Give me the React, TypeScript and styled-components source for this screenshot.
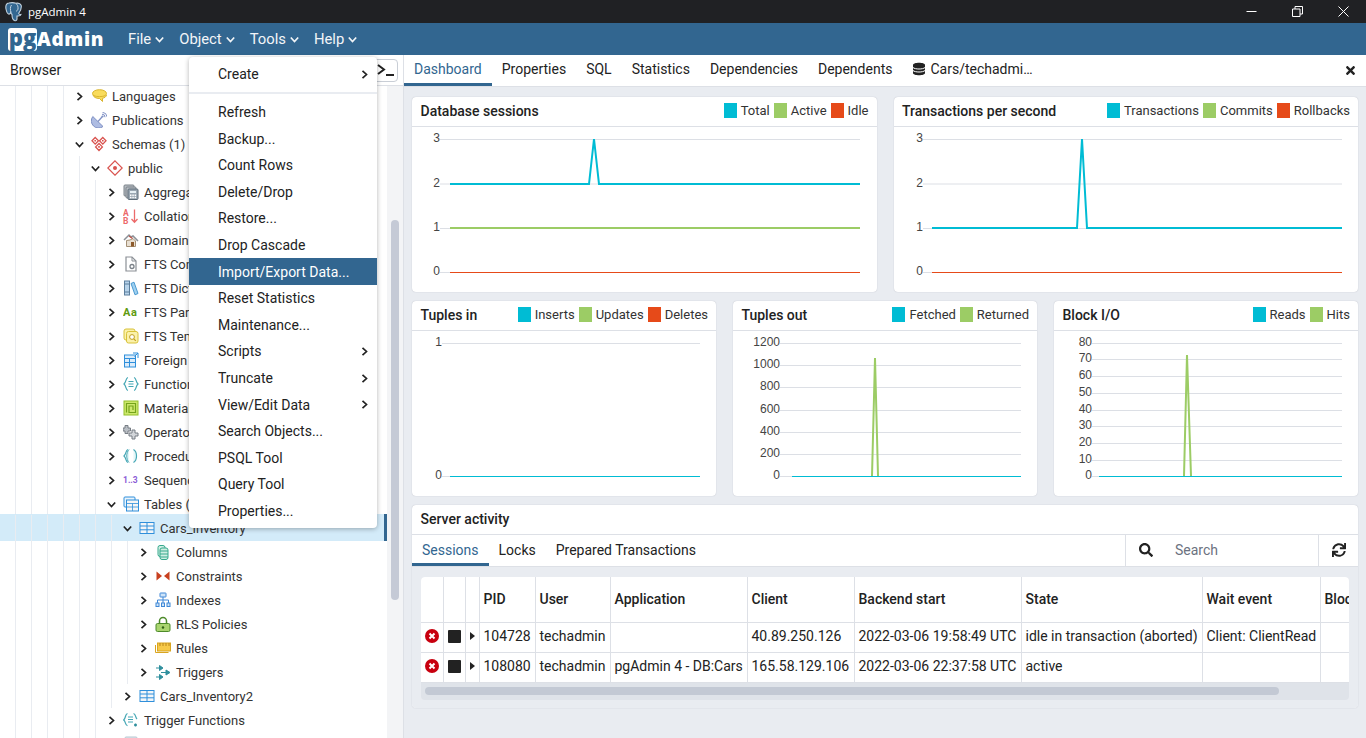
import React from "react";
import styled, { createGlobalStyle } from "styled-components";
import { FaSearch, FaSync, FaTimes } from "react-icons/fa";

const BLUE = "#326690";
const LINE = "#dde0e6";
const PAGE = "#e9ecf1";
const TEXT = "#222222";
const TEAL = "#00bcd4";
const GREEN = "#9ccc65";
const ORANGE = "#e64a19";

const GlobalStyle = createGlobalStyle`
  html, body {
    margin: 0;
    height: 100%;
    overflow: hidden;
  }
  body {
    font-family: Roboto, "Liberation Sans", sans-serif;
    font-size: 14px;
    color: ${TEXT};
  }
  * {
    box-sizing: border-box;
  }
`;

/* ---------- icons ---------- */

const icons: Record<string, React.ReactNode> = {
  languages: (
    <>
      <ellipse cx="8.500" cy="5.500" rx="7" ry="3.800" fill="#f9dc5c" stroke="#d9b530" />
      <path d="M2 7c.5 2 3 3.500 6.500 3.500l3 3v-3.200c2-.4 3.700-1.500 4-3.300" fill="#f9dc5c" stroke="#d9b530" />
      <path d="M2.500 7.500c3 1.500 9 1.500 12 0" fill="none" stroke="#d9b530" />
    </>
  ),
  publications: (
    <>
      <path d="M1.800 4.500L12 14.500A7.200 7.200 0 0 1 1.800 4.500z" fill="#aebce2" stroke="#7f90c4" />
      <path d="M7 9.500l4-4.500" stroke="#7f90c4" strokeWidth="1.200" />
      <circle cx="11.500" cy="4.500" r="1.100" fill="#7f90c4" />
      <path d="M11 2.200a3 3 0 0 1 3 3M11.500 .3a5 5 0 0 1 4.500 4.500" fill="none" stroke="#7f90c4" />
    </>
  ),
  schemas: (
    <>
      <path d="M4.200 1.500l3.300 3.300-3.300 3.300L1 4.800zM11.800 1.500L15 4.800l-3.200 3.300-3.300-3.300zM8 7.500l3.400 3.400L8 14.500l-3.400-3.600z" fill="#fff" stroke="#d9534f" strokeWidth="1.300" />
      <path d="M3.400 4h1.600v1.600H3.400zM11 4h1.600v1.600H11zM7.200 10.100h1.600v1.600H7.200z" fill="#d9534f" />
    </>
  ),
  schema: (
    <>
      <path d="M8 .8L15.200 8 8 15.200.8 8z" fill="#fff" stroke="#d9534f" strokeWidth="1.200" />
      <circle cx="8" cy="8" r="2" fill="#d9534f" />
    </>
  ),
  aggregates: (
    <>
      <rect x="1" y="1" width="10" height="11" rx="1" fill="#b9bec4" stroke="#7b8289" />
      <rect x="3" y="3" width="10" height="11" rx="1" fill="#b9bec4" stroke="#7b8289" />
      <rect x="5" y="5" width="10" height="10.500" rx="1" fill="#9aa7b2" stroke="#5f6d78" />
      <path d="M7 7h6v2H7z" fill="#e7f0f4" />
      <path d="M7 10.500h1.500V12H7zM9.300 10.500h1.500V12H9.300zM11.600 10.500h1.500V12h-1.500zM7 12.800h1.500v1.500H7zM9.300 12.800h1.500v1.500H9.300zM11.600 12.800h1.500v1.500h-1.500z" fill="#fff" />
    </>
  ),
  collations: (
    <>
      <text x="0" y="7.500" fontFamily="Roboto" fontWeight="700" fontSize="8.500" fill="#ec6a6a">A</text>
      <text x="0" y="15.500" fontFamily="Roboto" fontWeight="700" fontSize="8.500" fill="#ec6a6a">B</text>
      <path d="M11.500 1.500v12.500M8.500 11l3 3.200 3-3.200" fill="none" stroke="#ec6a6a" strokeWidth="1.300" />
    </>
  ),
  domains: (
    <>
      <path d="M1 8l5-5 2 2 2-1 5 5" fill="none" stroke="#8b9096" strokeWidth="1.500" />
      <path d="M3.500 8.500v6h9v-5.500L10 6.500 7 8z" fill="#e8dfd2" stroke="#a38f75" />
      <rect x="8" y="10" width="3" height="4.500" fill="#8d5a2b" />
      <path d="M6 4l3.500 2.500" stroke="#c0564a" strokeWidth="1.300" />
    </>
  ),
  ftsconfig: (
    <>
      <path d="M3 1h6l4 4v10H3z" fill="#fff" stroke="#8b9096" strokeWidth="1.200" />
      <path d="M9 1v4h4" fill="none" stroke="#8b9096" />
      <circle cx="9" cy="10.500" r="2" fill="none" stroke="#7b8289" strokeWidth="1.300" />
    </>
  ),
  ftsdict: (
    <>
      <rect x="1.500" y="1" width="5" height="14" fill="#b7d3ea" stroke="#5d7f9d" />
      <path d="M1.500 4h5M1.500 12h5" stroke="#5d7f9d" />
      <path d="M8 3.500l3-1.300 4 11.300-3 1.300z" fill="#9fd0f0" stroke="#4b9ad1" />
    </>
  ),
  ftsparser: (
    <text x="0" y="12" fontFamily="Roboto" fontWeight="700" fontSize="11" letterSpacing=".6" fill="#5f9b11">Aa</text>
  ),
  ftstemplate: (
    <>
      <rect x="1" y="1" width="11" height="11" rx="2" fill="#fbf1a9" stroke="#d8c23a" />
      <rect x="3.500" y="3.500" width="11.500" height="11.500" rx="2" fill="#fbf1a9" stroke="#d8c23a" />
      <circle cx="9" cy="9" r="2.400" fill="#fff" stroke="#c29f1e" />
      <path d="M10.800 10.800l2 2" stroke="#c29f1e" strokeWidth="1.200" />
    </>
  ),
  foreign: (
    <>
      <rect x="1.500" y="3" width="11" height="12" fill="#dcecfa" stroke="#2f8fdb" />
      <path d="M1.500 6.500h11M1.500 10.500h11M6.500 6.500V15" stroke="#2f8fdb" />
      <path d="M10 1h5v5M15 1l-3.500 3.500" fill="none" stroke="#2f8fdb" />
    </>
  ),
  functions: (
    <>
      <path d="M5 1.500C2.500 2 3.500 6 1 8c2.500 2 1.500 6 4 6.500M11 1.500c2.500.5 1.500 4.500 4 6.500-2.500 2-1.500 6-4 6.500" fill="none" stroke="#45a7b5" strokeWidth="1.200" />
      <path d="M5.500 5.500h5M5.500 8h5M5.500 10.500h5" stroke="#45a7b5" strokeWidth="1.200" />
    </>
  ),
  matviews: (
    <>
      <rect x="1" y="1" width="14" height="14" fill="#cde86d" stroke="#93c02b" />
      <path d="M3.500 12.500v-9h9v9H6v-6.500h4v4" fill="none" stroke="#74a31a" strokeWidth="1.200" />
    </>
  ),
  operators: (
    <>
      <path d="M2 1.500h3v2.500h2.500v3H5v2.500H2V7H0V4h2z" fill="#b9bec4" stroke="#777d84" />
      <path d="M9 6h3v3h3v3h-3v3H9v-3H6V9h3z" fill="#d3d6da" stroke="#777d84" />
    </>
  ),
  procedures: (
    <>
      <path d="M5 1.500C2.500 2 3.500 6 1 8c2.500 2 1.500 6 4 6.500" fill="none" stroke="#45a7b5" strokeWidth="1.200" />
      <path d="M10.500 1.500c4 2.500 4 10.500 0 13" fill="#e3f6f8" stroke="#45a7b5" strokeWidth="1.200" />
      <path d="M6 1.500c-3 3-3 10 0 13" fill="#e3f6f8" stroke="#45a7b5" />
    </>
  ),
  sequences: (
    <text x="0" y="11" fontFamily="Roboto" fontWeight="700" fontSize="8.500" fill="#8b5cd6">1..3</text>
  ),
  tables: (
    <>
      <rect x="1" y="1" width="11" height="10" rx="1" fill="#eaf4fc" stroke="#2f8fdb" />
      <rect x="3.500" y="4" width="12" height="11" fill="#f5f5f5" stroke="#2f8fdb" />
      <path d="M3.500 7.500h12M3.500 11h12M9.500 7.500V15" stroke="#2f8fdb" strokeWidth=".8" />
    </>
  ),
  table: (
    <>
      <rect x="1" y="2.500" width="14" height="11" fill="#f2f5f8" stroke="#2f8fdb" />
      <path d="M1 6h14M1 9.800h14M8 2.500v11" stroke="#2f8fdb" />
    </>
  ),
  columns: (
    <>
      <rect x="3" y="1.500" width="7" height="11" rx="2" fill="#cfeee3" stroke="#36a98d" />
      <rect x="5" y="4" width="8" height="11.500" rx="2" fill="#cfeee3" stroke="#36a98d" />
      <path d="M5 7h8M5 10h8M5 13h8" stroke="#36a98d" />
    </>
  ),
  constraints: (
    <>
      <path d="M1.500 3.500L7 8l-5.500 4.500z" fill="#c8401f" />
      <path d="M14.500 3.500L9 8l5.500 4.500z" fill="#c8401f" />
    </>
  ),
  indexes: (
    <>
      <rect x="5" y="1" width="6" height="4" rx=".5" fill="#cfe4f8" stroke="#3f87d6" />
      <path d="M8 5v3M2.500 11V8h11v3M8 8v3" fill="none" stroke="#3f87d6" />
      <rect x="1" y="11" width="3" height="3.500" fill="#cfe4f8" stroke="#3f87d6" />
      <rect x="6.500" y="11" width="3" height="3.500" fill="#cfe4f8" stroke="#3f87d6" />
      <rect x="12" y="11" width="3" height="3.500" fill="#cfe4f8" stroke="#3f87d6" />
    </>
  ),
  rls: (
    <>
      <path d="M4.500 8V5a3.500 3.500 0 0 1 7 0v3" fill="none" stroke="#4d8a2a" strokeWidth="1.500" />
      <rect x="1" y="7.500" width="14" height="8" rx="1.500" fill="#a9d46f" stroke="#4d8a2a" />
      <circle cx="8" cy="11.500" r="1.200" fill="#2f5f14" />
    </>
  ),
  rules: (
    <>
      <rect x="2.500" y="3" width="13" height="8" fill="#f7c948" stroke="#d9a520" />
      <path d="M.5 5v7.500h13" fill="none" stroke="#d9a520" />
      <path d="M5 3v3M8 3v3M11 3v3M14 3v3" stroke="#b9861a" />
    </>
  ),
  triggers: (
    <>
      <path d="M1 4h3.500v-2.500L8 4 4.500 6.500V4M1 13h3.500v-2.500L8 13l-3.500 2.500V13" fill="#2f8f9d" stroke="#2f8f9d" />
      <path d="M6 8.500h5V6l4 2.500-4 2.500V8.500" fill="#2f8f9d" stroke="#2f8f9d" />
    </>
  ),
  triggerfns: (
    <>
      <path d="M4.500 1.500C2 2 3 6 .7 8c2.300 2 1.300 5 3.800 5.800M10.500 1.500c2.500.5 1.500 3.500 3.500 5.500" fill="none" stroke="#45a7b5" strokeWidth="1.200" />
      <path d="M5 5h5M5 7.500h5M5 10h5" stroke="#45a7b5" strokeWidth="1.100" />
      <path d="M11 13h3M12.500 11.500v3" stroke="#2f8f9d" strokeWidth="1.500" />
    </>
  ),
  types: <rect x="2" y="1" width="12" height="14" rx="1" fill="#dfe8ee" stroke="#b7c6d0" />,
};

function NodeIcon({ name }: { name: string }) {
  return (
    <svg width="16" height="16" viewBox="0 0 16 16">
      {icons[name]}
    </svg>
  );
}

function Chevron({ dir }: { dir: "right" | "down" }) {
  return (
    <svg width="9" height="9" viewBox="0 0 9 9">
      <path
        d={dir === "right" ? "M2.500 .8L6.500 4.500 2.500 8.200" : "M.8 2.500L4.500 6.500 8.200 2.500"}
        fill="none"
        stroke="currentColor"
        strokeWidth="1.700"
      />
    </svg>
  );
}

function Elephant() {
  return (
    <svg width="18" height="20" viewBox="0 0 18 20">
      <path
        d="M4 1c-3 0-3.500 3.500-3 6 .4 2 1.200 4.500 2.500 5 1 .4 1.800-.6 2.200-1.500.3 1 .8 1.500 1.300 2 0 2 .2 5 2.500 6 1.500.6 2.500-.2 2.500-1.800V14c2 .2 3.800-.6 4-1.500-1.300.2-2-.3-2.300-1.200 1.800-2.500 3-5.500 2.500-7.800C15.700 1.500 13 .8 11 1.300 9 .6 6.500.5 4 1z"
        fill="#336791"
        stroke="#c3d3e0"
        strokeWidth="1.100"
      />
      <path d="M6.500 3c-1.500 2-1.300 5-.4 7.500M11 1.500c1.500 1 2.300 3 2 5.500-.2 1-.8 1.800-2 2.200" fill="none" stroke="#c3d3e0" />
    </svg>
  );
}

/* ---------- data ---------- */

const treeRows = [
  { level: 4, icon: "languages", label: "Languages" },
  { level: 4, icon: "publications", label: "Publications" },
  { level: 4, icon: "schemas", label: "Schemas (1)", open: true },
  { level: 5, icon: "schema", label: "public", open: true },
  { level: 6, icon: "aggregates", label: "Aggregates" },
  { level: 6, icon: "collations", label: "Collations" },
  { level: 6, icon: "domains", label: "Domains" },
  { level: 6, icon: "ftsconfig", label: "FTS Configurations" },
  { level: 6, icon: "ftsdict", label: "FTS Dictionaries" },
  { level: 6, icon: "ftsparser", label: "FTS Parsers" },
  { level: 6, icon: "ftstemplate", label: "FTS Templates" },
  { level: 6, icon: "foreign", label: "Foreign Tables" },
  { level: 6, icon: "functions", label: "Functions" },
  { level: 6, icon: "matviews", label: "Materialized Views" },
  { level: 6, icon: "operators", label: "Operators" },
  { level: 6, icon: "procedures", label: "Procedures" },
  { level: 6, icon: "sequences", label: "Sequences" },
  { level: 6, icon: "tables", label: "Tables (2)", open: true },
  { level: 7, icon: "table", label: "Cars_Inventory", open: true, selected: true },
  { level: 8, icon: "columns", label: "Columns" },
  { level: 8, icon: "constraints", label: "Constraints" },
  { level: 8, icon: "indexes", label: "Indexes" },
  { level: 8, icon: "rls", label: "RLS Policies" },
  { level: 8, icon: "rules", label: "Rules" },
  { level: 8, icon: "triggers", label: "Triggers" },
  { level: 7, icon: "table", label: "Cars_Inventory2" },
  { level: 6, icon: "triggerfns", label: "Trigger Functions" },
  { level: 6, icon: "types", label: "Types" },
];

const menuItems = [
  { label: "Refresh" },
  { label: "Backup..." },
  { label: "Count Rows" },
  { label: "Delete/Drop" },
  { label: "Restore..." },
  { label: "Drop Cascade" },
  { label: "Import/Export Data...", active: true },
  { label: "Reset Statistics" },
  { label: "Maintenance..." },
  { label: "Scripts", sub: true },
  { label: "Truncate", sub: true },
  { label: "View/Edit Data", sub: true },
  { label: "Search Objects..." },
  { label: "PSQL Tool" },
  { label: "Query Tool" },
  { label: "Properties..." },
];

const columns: [string, number][] = [
  ["", 22],
  ["", 22],
  ["", 14],
  ["PID", 56],
  ["User", 75],
  ["Application", 137],
  ["Client", 107],
  ["Backend start", 167],
  ["State", 181],
  ["Wait event", 118],
  ["Blocking PIDs", 120],
];

const sessions = [
  ["104728", "techadmin", "", "40.89.250.126", "2022-03-06 19:58:49 UTC", "idle in transaction (aborted)", "Client: ClientRead", ""],
  ["108080", "techadmin", "pgAdmin 4 - DB:Cars", "165.58.129.106", "2022-03-06 22:37:58 UTC", "active", "", ""],
];

type Series = { color: string; points: [number, number][]; thin?: boolean };
type ChartProps = {
  width: number;
  gridFrom: number;
  gridTo: number;
  ticks: [string, number][];
  series: Series[];
};

const flat = (from: number, to: number, y: number): [number, number][] => [
  [from, y],
  [to, y],
];

/* ---------- page ---------- */

function Chart({ width, gridFrom, gridTo, ticks, series }: ChartProps) {
  return (
    <PlotSvg viewBox={`0 0 ${width} 165`}>
      {ticks.map(([label, y]) => (
        <g key={label}>
          <line x1={gridFrom} x2={gridTo} y1={y + 0.5} y2={y + 0.5} stroke="#dcdfe5" strokeWidth="1" />
          <text x={gridFrom} y={y + 3} textAnchor="end" fontFamily="Liberation Sans" fontSize="12" fill="#444">
            {label}
          </text>
        </g>
      ))}
      {series.map((s) => (
        <polyline
          key={s.color}
          points={s.points.map((p) => p.join(",")).join(" ")}
          fill="none"
          stroke={s.color}
          strokeWidth={s.thin ? 1 : 2}
        />
      ))}
    </PlotSvg>
  );
}

function ChartCard({
  title,
  legend,
  ...chart
}: ChartProps & { title: string; legend: [string, string][] }) {
  return (
    <Card>
      <CardHeader>
        <CardTitle>{title}</CardTitle>
        <Legend>
          {legend.map(([name, color]) => (
            <LegendItem key={name}>
              <Swatch $color={color} />
              {name}
            </LegendItem>
          ))}
        </Legend>
      </CardHeader>
      <Chart {...chart} />
    </Card>
  );
}

export default function App() {
  return (
    <Page>
      <GlobalStyle />
      <TitleBar>
        <Elephant />
        <WindowTitle>pgAdmin 4</WindowTitle>
        <WindowButtons>
          <WindowButton>
            <svg width="11" height="11" viewBox="0 0 11 11">
              <path d="M.5 5.500h10" stroke="#fff" />
            </svg>
          </WindowButton>
          <WindowButton>
            <svg width="11" height="11" viewBox="0 0 11 11">
              <path d="M.5 3h7.500v7.500H.5zM3 3V.5h7.500V8H8" fill="none" stroke="#fff" />
            </svg>
          </WindowButton>
          <WindowButton>
            <svg width="11" height="11" viewBox="0 0 11 11">
              <path d="M.5.500l10 10M10.500.5l-10 10" stroke="#fff" />
            </svg>
          </WindowButton>
        </WindowButtons>
      </TitleBar>

      <NavBar>
        <Logo>
          <LogoBox>pg</LogoBox>
          Admin
        </Logo>
        <NavMenu>
          {["File", "Object", "Tools", "Help"].map((item) => (
            <NavItem key={item}>
              {item}
              <Chevron dir="down" />
            </NavItem>
          ))}
        </NavMenu>
      </NavBar>

      <Workspace>
        <LeftPanel>
          <PanelHeader>
            Browser
            <PsqlButton>
              <svg width="18" height="14" viewBox="0 0 18 14">
                <path d="M1 2l6 4.500-6 4.500" fill="none" stroke="#222" strokeWidth="2" />
                <path d="M9 12h8" stroke="#222" strokeWidth="2" />
              </svg>
            </PsqlButton>
          </PanelHeader>
          <TreeWrap>
            <Tree>
              <TreeScroll>
                {treeRows.map((row) => (
                  <TreeRow key={row.label} $selected={row.selected}>
                    {Array.from({ length: row.level }, (_, i) => (
                      <Guide key={i} />
                    ))}
                    <Toggle>
                      <Chevron dir={row.open ? "down" : "right"} />
                    </Toggle>
                    <IconBox>
                      <NodeIcon name={row.icon} />
                    </IconBox>
                    <TreeLabel>{row.label}</TreeLabel>
                  </TreeRow>
                ))}
              </TreeScroll>
            </Tree>
            <ScrollTrack>
              <ScrollThumb />
            </ScrollTrack>
          </TreeWrap>
        </LeftPanel>

        <Main>
          <TabBar>
            <Tab $active>Dashboard</Tab>
            <Tab>Properties</Tab>
            <Tab>SQL</Tab>
            <Tab>Statistics</Tab>
            <Tab>Dependencies</Tab>
            <Tab>Dependents</Tab>
            <ObjectTab>
              <svg width="14" height="14" viewBox="0 0 14 14">
                <path d="M1 3c0-3 12-3 12 0v8c0 3-12 3-12 0z" fill="#222" />
                <path d="M1 5.500c2 2 10 2 12 0M1 8.500c2 2 10 2 12 0" fill="none" stroke="#fff" />
              </svg>
              Cars/techadmi…
            </ObjectTab>
            <CloseTab>
              <FaTimes size={13} />
            </CloseTab>
          </TabBar>

          <Dashboard>
            <ChartRow $count={2}>
              <ChartCard
                title="Database sessions"
                legend={[["Total", TEAL], ["Active", GREEN], ["Idle", ORANGE]]}
                width={464.5}
                gridFrom={28}
                gridTo={448}
                ticks={[["3", 12], ["2", 56.5], ["1", 101], ["0", 145]]}
                series={[
                  { color: ORANGE, points: flat(38, 448, 145.5), thin: true },
                  { color: GREEN, points: flat(38, 448, 101) },
                  { color: TEAL, points: [[38, 57], [177, 57], [182, 12], [187, 57], [448, 57]] },
                ]}
              />
              <ChartCard
                title="Transactions per second"
                legend={[["Transactions", TEAL], ["Commits", GREEN], ["Rollbacks", ORANGE]]}
                width={464.5}
                gridFrom={29}
                gridTo={448}
                ticks={[["3", 12], ["2", 56.5], ["1", 101], ["0", 145]]}
                series={[
                  { color: ORANGE, points: flat(38, 448, 145.5), thin: true },
                  { color: TEAL, points: [[38, 101], [183, 101], [188, 12], [193, 101], [448, 101]] },
                ]}
              />
            </ChartRow>
            <ChartRow $count={3}>
              <ChartCard
                title="Tuples in"
                legend={[["Inserts", TEAL], ["Updates", GREEN], ["Deletes", ORANGE]]}
                width={304}
                gridFrom={30}
                gridTo={288}
                ticks={[["1", 12], ["0", 145]]}
                series={[{ color: TEAL, points: flat(38, 288, 145.5), thin: true }]}
              />
              <ChartCard
                title="Tuples out"
                legend={[["Fetched", TEAL], ["Returned", GREEN]]}
                width={304}
                gridFrom={47}
                gridTo={288}
                ticks={[["1200", 12], ["1000", 34], ["800", 56], ["600", 79], ["400", 101], ["200", 123], ["0", 145]]}
                series={[
                  { color: GREEN, points: [[139, 145], [142, 27], [145, 145]] },
                  { color: TEAL, points: flat(59, 288, 145.5), thin: true },
                ]}
              />
              <ChartCard
                title="Block I/O"
                legend={[["Reads", TEAL], ["Hits", GREEN]]}
                width={304}
                gridFrom={38}
                gridTo={288}
                ticks={[["80", 12], ["70", 28], ["60", 45], ["50", 62], ["40", 79], ["30", 95], ["20", 112], ["10", 129], ["0", 145]]}
                series={[
                  { color: GREEN, points: [[130, 145], [133, 24], [137, 145]] },
                  { color: TEAL, points: flat(45, 288, 145.5), thin: true },
                ]}
              />
            </ChartRow>

            <ActivityCard>
              <CardHeader>
                <CardTitle>Server activity</CardTitle>
              </CardHeader>
              <ActivityBar>
                <ActivityTabs>
                  <SubTab $active>Sessions</SubTab>
                  <SubTab>Locks</SubTab>
                  <SubTab>Prepared Transactions</SubTab>
                </ActivityTabs>
                <SearchIcon>
                  <FaSearch size={14} />
                </SearchIcon>
                <SearchInput placeholder="Search" />
                <RefreshButton>
                  <FaSync size={14} />
                </RefreshButton>
              </ActivityBar>
              <GridArea>
                <GridFrame>
                  <SessionTable>
                    <colgroup>
                      {columns.map(([, width], i) => (
                        <col key={i} width={width} />
                      ))}
                    </colgroup>
                    <thead>
                      <tr>
                        {columns.map(([name], i) => (
                          <HeadCell key={i}>{name}</HeadCell>
                        ))}
                      </tr>
                    </thead>
                    <tbody>
                      {sessions.map((row) => (
                        <tr key={row[0]}>
                          <Cell $center>
                            <svg width="14" height="14" viewBox="0 0 14 14">
                              <circle cx="7" cy="7" r="7" fill="#c8000f" />
                              <path d="M4.500 4.500l5 5M9.500 4.500l-5 5" stroke="#fff" strokeWidth="2" />
                            </svg>
                          </Cell>
                          <Cell $center>
                            <StopMark />
                          </Cell>
                          <Cell $center>
                            <CaretMark />
                          </Cell>
                          {row.map((value, i) => (
                            <Cell key={i}>{value}</Cell>
                          ))}
                        </tr>
                      ))}
                    </tbody>
                  </SessionTable>
                  <TableScroll>
                    <TableThumb />
                  </TableScroll>
                </GridFrame>
              </GridArea>
            </ActivityCard>
          </Dashboard>
        </Main>
      </Workspace>

      <ObjectMenu>
        <MenuItem>
          Create
          <Chevron dir="right" />
        </MenuItem>
        <MenuDivider />
        {menuItems.map((item) => (
          <MenuItem key={item.label} $active={item.active}>
            {item.label}
            {item.sub && <Chevron dir="right" />}
          </MenuItem>
        ))}
      </ObjectMenu>
    </Page>
  );
}

/* ---------- styles ---------- */

const Page = styled.div`
  position: relative;
  display: flex;
  flex-direction: column;
  width: 1366px;
  height: 738px;
  overflow: hidden;
  background: ${PAGE};
`;

const TitleBar = styled.div`
  display: flex;
  align-items: center;
  flex: 0 0 23px;
  padding-left: 5px;
  background: #202124;
  color: #fff;
`;

const WindowTitle = styled.span`
  margin-left: 5px;
  font: 11.500px "Open Sans", sans-serif;
`;

const WindowButtons = styled.div`
  display: flex;
  margin-left: auto;
`;

const WindowButton = styled.div`
  display: flex;
  align-items: center;
  justify-content: center;
  width: 46px;
  height: 20px;
`;

const NavBar = styled.div`
  display: flex;
  align-items: center;
  flex: 0 0 32px;
  padding-left: 8px;
  background: ${BLUE};
`;

const Logo = styled.div`
  display: flex;
  align-items: center;
  width: 96px;
  color: #fff;
  font: 800 19px "Open Sans", sans-serif;
  letter-spacing: 0.6px;
`;

const LogoBox = styled.span`
  display: flex;
  align-items: center;
  justify-content: center;
  width: 30px;
  height: 23px;
  padding-bottom: 5px;
  border-radius: 3px;
  background: #fff;
  color: ${BLUE};
  font-size: 22px;
  letter-spacing: 0;
`;

const NavMenu = styled.div`
  display: flex;
  gap: 15px;
  margin-left: 24px;
`;

const NavItem = styled.div`
  display: flex;
  align-items: center;
  gap: 4px;
  color: #f2f5f8;
  font-size: 14.800px;
`;

const Workspace = styled.div`
  display: flex;
  flex: 1;
  min-height: 0;
`;

const LeftPanel = styled.div`
  display: flex;
  flex-direction: column;
  flex: 0 0 404px;
  border-right: 1px solid ${LINE};
  background: #fff;
`;

const PanelHeader = styled.div`
  display: flex;
  align-items: center;
  justify-content: space-between;
  flex: 0 0 31px;
  padding: 0 5px 0 10px;
  border-bottom: 1px solid ${LINE};
`;

const PsqlButton = styled.div`
  display: flex;
  align-items: center;
  justify-content: flex-end;
  width: 30px;
  height: 23px;
  padding-right: 2px;
  border: 1px solid #c9ced6;
  border-radius: 4px;
`;

const TreeWrap = styled.div`
  display: flex;
  flex: 1;
  min-height: 0;
`;

const Tree = styled.div`
  flex: 0 0 387px;
  overflow: hidden;
`;

const TreeScroll = styled.div`
  margin-top: -2px;
`;

const TreeRow = styled.div<{ $selected?: boolean }>`
  display: flex;
  align-items: center;
  height: ${({ $selected }) => ($selected ? "27px" : "24px")};
  margin: ${({ $selected }) => ($selected ? "-2px 0 -1px" : "0")};
  ${({ $selected }) =>
    $selected &&
    `
    position: relative;
    padding-top: 1px;
    background: #d3ebf9;
    border-right: 3px solid ${BLUE};
  `}
`;

const Guide = styled.span`
  flex: 0 0 16px;
  align-self: stretch;
  border-right: 1px solid #e9ecf1;
`;

const Toggle = styled.span`
  display: flex;
  align-items: center;
  flex: 0 0 27px;
  padding-left: 11px;
  color: #222;
`;

const IconBox = styled.span`
  display: flex;
  flex: 0 0 16px;
  margin-right: 5px;
`;

const TreeLabel = styled.span`
  font-size: 13px;
  color: #333;
  white-space: nowrap;
`;

const ScrollTrack = styled.div`
  flex: 1;
  padding: 134px 4px 0;
  background: #f3f4f6;
`;

const ScrollThumb = styled.div`
  height: 380px;
  border-radius: 4px;
  background: #c5cad6;
`;

const Main = styled.div`
  display: flex;
  flex-direction: column;
  flex: 1;
  min-width: 0;
`;

const TabBar = styled.div`
  display: flex;
  flex: 0 0 31px;
  border-bottom: 1px solid ${LINE};
  background: #fff;
`;

const Tab = styled.div<{ $active?: boolean }>`
  display: flex;
  align-items: center;
  height: 31px;
  padding: 0 10px;
  color: ${({ $active }) => ($active ? BLUE : TEXT)};
  border-bottom: 3px solid ${({ $active }) => ($active ? BLUE : "transparent")};
`;

const ObjectTab = styled(Tab)`
  gap: 4px;
`;

const CloseTab = styled.div`
  display: flex;
  align-items: center;
  margin-left: auto;
  padding-right: 9px;
  color: #222;
`;

const Dashboard = styled.div`
  display: flex;
  flex-direction: column;
  gap: 9px;
  padding: 10px 8px;
`;

const ChartRow = styled.div<{ $count: number }>`
  display: grid;
  grid-template-columns: repeat(${({ $count }) => $count}, 1fr);
  gap: 17px;
`;

const Card = styled.div`
  display: flex;
  flex-direction: column;
  height: 195px;
  border-radius: 4px;
  background: #fff;
  box-shadow: 0 0 1px rgba(60, 70, 90, 0.35);
`;

const CardHeader = styled.div`
  display: flex;
  align-items: center;
  justify-content: space-between;
  flex: 0 0 30px;
  padding: 0 8px 2px 8.500px;
  border-bottom: 1px solid ${LINE};
`;

const CardTitle = styled.div`
  font-weight: 500;
  color: #222;
`;

const Legend = styled.div`
  display: flex;
  gap: 4px;
`;

const LegendItem = styled.div`
  display: flex;
  align-items: center;
  gap: 4px;
  font-size: 13px;
  color: #333;
`;

const Swatch = styled.span<{ $color: string }>`
  width: 13px;
  height: 15px;
  background: ${({ $color }) => $color};
`;

const PlotSvg = styled.svg`
  display: block;
  width: 100%;
  height: 165px;
`;

const ActivityCard = styled(Card)`
  height: 203px;
`;

const ActivityBar = styled.div`
  display: flex;
  align-items: stretch;
  flex: 0 0 32px;
  border-bottom: 1px solid ${LINE};
`;

const ActivityTabs = styled.div`
  display: flex;
  flex: 1;
`;

const SubTab = styled(Tab)`
  padding-top: 2px;
`;

const SearchIcon = styled.div`
  display: flex;
  align-items: center;
  justify-content: center;
  flex: 0 0 40px;
  padding-bottom: 1px;
  border-left: 1px solid ${LINE};
`;

const SearchInput = styled.input`
  width: 153px;
  padding: 0 0 1px 10px;
  border: 0;
  outline: 0;
  background: transparent;
  font: 14px Roboto, sans-serif;
  &::placeholder {
    color: #6b7280;
  }
`;

const RefreshButton = styled.div`
  display: flex;
  align-items: center;
  justify-content: center;
  flex: 0 0 40px;
  padding-bottom: 1px;
  border-left: 1px solid ${LINE};
`;

const GridArea = styled.div`
  flex: 1;
  min-height: 0;
  padding: 10px 9px 8px;
  background: ${PAGE};
  border-radius: 0 0 4px 4px;
`;

const GridFrame = styled.div`
  height: 123px;
  overflow: hidden;
  border-radius: 4px;
  background: #dfe3e9;
`;

const SessionTable = styled.table`
  width: 1019px;
  table-layout: fixed;
  border-collapse: collapse;
  background: #fff;
`;

const HeadCell = styled.th`
  height: 45px;
  padding: 0 4px 1px;
  border-right: 1px solid ${LINE};
  border-bottom: 1px solid ${LINE};
  text-align: left;
  font-weight: 500;
  white-space: nowrap;
  overflow: hidden;
`;

const Cell = styled.td<{ $center?: boolean }>`
  height: 30px;
  padding: ${({ $center }) => ($center ? "0 0 2px" : "0 4px 2px")};
  border-right: 1px solid ${LINE};
  border-bottom: 1px solid ${LINE};
  text-align: ${({ $center }) => ($center ? "center" : "left")};
  white-space: nowrap;
  overflow: hidden;
  svg {
    display: block;
    margin: 0 auto;
  }
`;

const StopMark = styled.span`
  display: block;
  width: 13px;
  height: 13px;
  margin: 0 auto;
  border-radius: 1px;
  background: #222;
`;

const CaretMark = styled.span`
  display: block;
  width: 0;
  height: 0;
  margin: 0 auto;
  border-top: 4px solid transparent;
  border-bottom: 4px solid transparent;
  border-left: 5px solid #222;
`;

const TableScroll = styled.div`
  padding: 4px 70px 0 4px;
`;

const TableThumb = styled.div`
  height: 8px;
  border-radius: 4px;
  background: #c3c9d4;
`;

const ObjectMenu = styled.div`
  position: absolute;
  top: 57px;
  left: 189px;
  width: 188px;
  padding: 3.800px 0 3.800px;
  border-radius: 4px;
  background: #fff;
  box-shadow: 0 1px 5px rgba(0, 0, 0, 0.3);
`;

const MenuItem = styled.div<{ $active?: boolean }>`
  display: flex;
  align-items: center;
  justify-content: space-between;
  height: 26.600px;
  padding: 0 8px 0 29px;
  background: ${({ $active }) => ($active ? BLUE : "transparent")};
  color: ${({ $active }) => ($active ? "#fff" : TEXT)};
`;

const MenuDivider = styled.div`
  height: 2px;
  margin: 4.700px 0;
  background: ${PAGE};
`;
